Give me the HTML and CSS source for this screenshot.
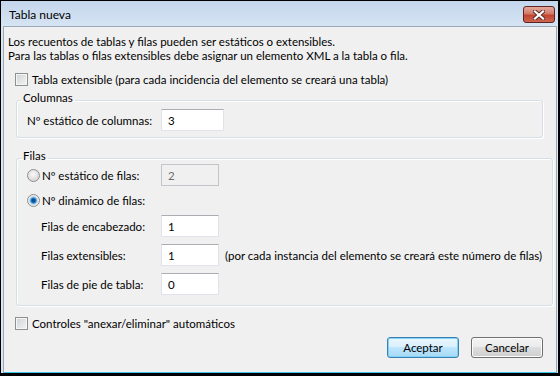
FILE: index.html
```html
<!DOCTYPE html>
<html lang="es">
  <head>
    <meta charset="UTF-8" />
    <title>Tabla nueva</title>
    <link rel="stylesheet" href="styles.css">
  </head>
  <body>
    <div class="window">
      <div class="titlebar">
        <span class="title">Tabla nueva</span>
        <button class="close" title="Cerrar">
          <svg width="12" height="10" viewBox="0 0 12 10">
            <path d="M2 1.5 L10 8.5 M10 1.5 L2 8.5" stroke="#5a2a2a" stroke-width="4" stroke-linecap="square" />
            <path d="M2 1.5 L10 8.5 M10 1.5 L2 8.5" stroke="#fff" stroke-width="2.2" stroke-linecap="square" />
          </svg>
        </button>
      </div>

      <div class="client">
        <p class="intro">
          Los recuentos de tablas y filas pueden ser estáticos o extensibles.<br>
          Para las tablas o filas extensibles debe asignar un elemento XML a la tabla o fila.
        </p>

        <label class="check">
          <input type="checkbox" />
          Tabla extensible (para cada incidencia del elemento se creará una tabla)
        </label>

        <fieldset class="group">
          <legend>Columnas</legend>
          <div class="row">
            <span class="label">Nº estático de columnas:</span>
            <input class="field wide" type="text" value="3" />
          </div>
        </fieldset>

        <fieldset class="group">
          <legend>Filas</legend>
          <div class="rows">
            <div class="row">
              <label class="label radio"><input type="radio" name="filas" /> Nº estático de filas:</label>
              <input class="field" type="text" value="2" disabled />
            </div>
            <label class="radio small"><input type="radio" name="filas" checked /> Nº dinámico de filas:</label>
            <div class="row">
              <span class="label sub">Filas de encabezado:</span>
              <input class="field" type="text" value="1" />
            </div>
            <div class="row">
              <span class="label sub">Filas extensibles:</span>
              <input class="field" type="text" value="1" />
              <span class="hint">(por cada instancia del elemento se creará este número de filas)</span>
            </div>
            <div class="row">
              <span class="label sub">Filas de pie de tabla:</span>
              <input class="field" type="text" value="0" />
            </div>
          </div>
        </fieldset>

        <label class="check bottom">
          <input type="checkbox" />
          Controles "anexar/eliminar" automáticos
        </label>

        <div class="buttons">
          <button class="btn default">Aceptar</button>
          <button class="btn">Cancelar</button>
        </div>
      </div>
    </div>
  </body>
</html>
```

FILE: styles.css
```css
body {
  margin: 0;
  font-family: Lato, "Liberation Sans", sans-serif;
  font-size: 11.5px;
  color: #000;
}
.window {
  width: 560px;
  height: 376px;
  box-sizing: border-box;
  border: 1px solid #000;
  border-right-width: 2px;
  border-bottom-width: 3px;
  background: #dbe6f3;
  display: flex;
  flex-direction: column;
}
.titlebar {
  height: 25px;
  flex: none;
  display: flex;
  align-items: flex-start;
  justify-content: space-between;
  padding: 5px 3px 0 8px;
  box-sizing: border-box;
  background: linear-gradient(#c4d6ec, #d6e4f3);
}
.title {
  line-height: 17px;
  font-size: 12px;
}
.close {
  width: 32px;
  height: 17px;
  padding: 0;
  border: 1px solid #5e2424;
  border-radius: 3px;
  background: linear-gradient(#e3a99c, #d27a6a 45%, #c2442f 55%, #cd6650);
  display: flex;
  align-items: center;
  justify-content: center;
}
.client {
  flex: 1;
  margin: 0 1px 0 2px;
  border: 1px solid #9aa8b8;
  border-bottom-color: #3ec3e8;
  background: #f0f0f0;
  display: flex;
  flex-direction: column;
}
.intro {
  margin: 0;
  padding: 8px 0 0 4px;
  line-height: 14px;
}
.check {
  display: flex;
  align-items: center;
  height: 15px;
  margin: 9px 0 0 11px;
  gap: 4px;
}
.check.bottom {
  margin-top: 10px;
}
input[type="checkbox"],
input[type="radio"] {
  appearance: none;
  margin: 0;
  width: 13px;
  height: 13px;
  flex: none;
  box-sizing: border-box;
  border: 1px solid #8e8f8f;
  background: linear-gradient(135deg, #cfd2d6, #f4f4f4);
  box-shadow: inset 0 0 0 1px #f6f6f6;
}
input[type="radio"] {
  border-radius: 50%;
  box-shadow: none;
  background: radial-gradient(circle at 45% 40%, #fafafa, #d8d8d8 70%, #e8e8e8);
}
input[type="radio"]:checked {
  background: radial-gradient(circle, #0b4f92 0 1.5px, #2f86d2 2.5px, #8cc8f0 3.5px, #e2e2e2 4.3px, #f2f2f2 6px);
}
.group {
  margin: 4px 13px 0 12px;
  padding: 0 10px 6px 10px;
  border: 1px solid #d5dfe5;
  border-radius: 3px;
  box-shadow: inset 1px 1px 0 #fff, 1px 1px 0 #fff;
}
.group + .group {
  margin-top: 11px;
  padding-bottom: 10px;
}
legend {
  margin-left: -6px;
  padding: 0 2px 4px;
  line-height: 14px;
}
.rows {
  display: flex;
  flex-direction: column;
  gap: 7px;
  margin-top: -3px;
}
.row {
  display: flex;
  align-items: center;
  height: 22px;
}
.label {
  width: 134px;
  flex: none;
}
.sub {
  padding-left: 14px;
  box-sizing: border-box;
}
.radio {
  display: flex;
  align-items: center;
  gap: 2px;
}
.radio.small {
  height: 15px;
}
.field {
  width: 58px;
  height: 22px;
  box-sizing: border-box;
  margin: 0;
  padding: 0 6px;
  border: 1px solid #e2e3ea;
  border-top-color: #abadb3;
  background: #fff;
  font: inherit;
  color: #000;
  outline: none;
}
.field.wide {
  width: 63px;
}
.field:disabled {
  background: #f0f0f0;
  border-color: #c2c6ca;
  color: #6d6d6d;
}
.hint {
  margin-left: 6px;
  white-space: nowrap;
}
.buttons {
  display: flex;
  justify-content: flex-end;
  gap: 12px;
  margin: 6px 13px 0 0;
}
.btn {
  width: 72px;
  height: 21px;
  padding: 0;
  border: 1px solid #707070;
  border-radius: 3px;
  background: linear-gradient(#f2f2f2, #ebebeb 50%, #dddddd 50%, #cfcfcf);
  box-shadow: inset 0 0 0 1px #fcfcfc;
  font: inherit;
  color: #000;
}
.btn.default {
  border-color: #3c7fb1;
  background: linear-gradient(#eaf6fd, #d9f0fc 50%, #bee6fd 50%, #a7d9f5);
  box-shadow: inset 0 0 0 1px #7fd3f5;
}
```
